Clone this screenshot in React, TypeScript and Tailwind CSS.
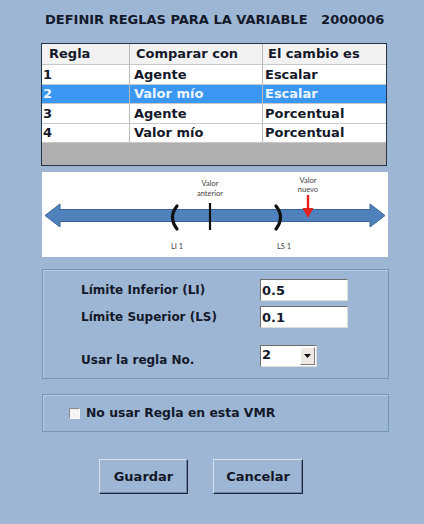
import React, { useState } from 'react';

type Regla = { id: number; comparar: string; cambio: string };

const reglas: Regla[] = [
    { id: 1, comparar: 'Agente', cambio: 'Escalar' },
    { id: 2, comparar: 'Valor mío', cambio: 'Escalar' },
    { id: 3, comparar: 'Agente', cambio: 'Porcentual' },
    { id: 4, comparar: 'Valor mío', cambio: 'Porcentual' },
];

const font = 'font-["DejaVu_Sans",Verdana,sans-serif]';

// number line with the LI / LS interval, old value tick and new value arrow
const Diagrama: React.FC = () => (
    <div className="w-[346px] h-[85px] bg-white">
        <svg width="346" height="85" viewBox="0 0 346 85">
            <polygon
                points="3,43.5 18,32 18,37.5 328,37.5 328,32 343,43.5 328,55 328,49.5 18,49.5 18,55"
                fill="#4f81bd"
                stroke="#3b6496"
                strokeWidth="1"
            />
            <path d="M135 34 Q126 45 135 57" fill="none" stroke="#111" strokeWidth="3.2" strokeLinecap="round" />
            <path d="M234 34 Q243 45 234 57" fill="none" stroke="#111" strokeWidth="3.2" strokeLinecap="round" />
            <line x1="168" y1="31" x2="168" y2="58" stroke="#111" strokeWidth="2.2" />
            <line x1="266" y1="23" x2="266" y2="38" stroke="#e3211f" strokeWidth="2.4" />
            <polygon points="260.5,36 271.5,36 266,46" fill="#e3211f" />
            <g fontFamily="Lato, 'Open Sans', sans-serif" fontSize="7.5" fill="#444" textAnchor="middle">
                <text x="168" y="14">Valor</text>
                <text x="168" y="24">anterior</text>
                <text x="266" y="11">Valor</text>
                <text x="266" y="20">nuevo</text>
                <text x="135" y="77">LI 1</text>
                <text x="242" y="77">LS 1</text>
            </g>
        </svg>
    </div>
);

const App: React.FC = () => {
    const [selected, setSelected] = useState(2);
    const [li, setLi] = useState('0.5');
    const [ls, setLs] = useState('0.1');
    const [noUsar, setNoUsar] = useState(false);

    return (
        <div className={`w-[424px] h-[524px] bg-[#9cb6d4] text-[#14192a] ${font} overflow-hidden`}>
            <div className="ml-[41px] w-[347px] flex flex-col">
                <h1 className="pt-[11px] pl-[4px] text-[13px] font-bold leading-[18px] whitespace-pre">
                    DEFINIR REGLAS PARA LA VARIABLE   2000006
                </h1>

                {/* rules grid */}
                <div className="mt-[14px] w-[346px] h-[123px] border border-[#26344a] bg-[#b0b0b0] flex flex-col text-[13px] font-bold">
                    <div className="flex h-[21px] bg-[#f2f2f2] border-b border-[#c8c8c8] items-center">
                        <div className="w-[88px] pl-[7px] border-r border-[#b8b8b8] h-full flex items-center">Regla</div>
                        <div className="w-[133px] pl-[6px] border-r border-[#b8b8b8] h-full flex items-center">Comparar con</div>
                        <div className="flex-1 pl-[5px] h-full flex items-center">El cambio es</div>
                    </div>
                    {reglas.map((r) => {
                        const sel = r.id === selected;
                        return (
                            <div
                                key={r.id}
                                onClick={() => setSelected(r.id)}
                                className={`flex h-[19.5px] border-b border-[#c8c8c8] ${
                                    sel ? 'bg-[#3a97f2] text-[#eef5ff]' : 'bg-white'
                                }`}
                            >
                                <div className="w-[88px] pl-[1px] border-r border-[#b8b8b8] flex items-center">{r.id}</div>
                                <div className="w-[133px] pl-[4px] border-r border-[#b8b8b8] flex items-center">{r.comparar}</div>
                                <div className="flex-1 pl-[2px] flex items-center">{r.cambio}</div>
                            </div>
                        );
                    })}
                </div>

                <div className="mt-[6px] ml-[1px]">
                    <Diagrama />
                </div>

                {/* limits */}
                <div className="mt-[12px] ml-[1px] w-[347px] h-[110px] border border-[#7995b6] shadow-[inset_1px_1px_0_#b9cbe0] pl-[38px] pt-[9px] text-[12px] font-bold">
                    <div className="flex items-center h-[22px]">
                        <span className="w-[179px]">Límite Inferior (LI)</span>
                        <input
                            value={li}
                            onChange={(e) => setLi(e.target.value)}
                            className="w-[88px] h-[22px] bg-white border border-t-[#6f6f6f] border-l-[#6f6f6f] border-b-[#dcdcdc] border-r-[#dcdcdc] px-[1px] text-[13px] font-bold outline-none"
                        />
                    </div>
                    <div className="flex items-center h-[22px] mt-[5px]">
                        <span className="w-[179px]">Límite Superior (LS)</span>
                        <input
                            value={ls}
                            onChange={(e) => setLs(e.target.value)}
                            className="w-[88px] h-[22px] bg-white border border-t-[#6f6f6f] border-l-[#6f6f6f] border-b-[#dcdcdc] border-r-[#dcdcdc] px-[1px] text-[13px] font-bold outline-none"
                        />
                    </div>
                    <div className="flex items-start h-[22px] mt-[17px]">
                        <span className="w-[179px] pt-[6px]">Usar la regla No.</span>
                        <div className="w-[57px] h-[22px] bg-white border border-t-[#6f6f6f] border-l-[#6f6f6f] border-b-[#dcdcdc] border-r-[#dcdcdc] flex items-center justify-between pl-[1px] text-[13px]">
                            <span className="-mt-[3px]">{selected}</span>
                            <span className="w-[15px] h-[18px] mr-[1px] bg-[#ece9e2] border border-t-white border-l-white border-b-[#7d7d7d] border-r-[#7d7d7d] flex items-center justify-center">
                                <svg width="7" height="4" viewBox="0 0 7 4">
                                    <polygon points="0,0 7,0 3.5,4" fill="#111" />
                                </svg>
                            </span>
                        </div>
                    </div>
                </div>

                {/* disable rule */}
                <div className="mt-[15px] ml-[1px] w-[347px] h-[38px] border border-[#7995b6] shadow-[inset_1px_1px_0_#b9cbe0] pl-[26px] flex items-center text-[12.4px] font-bold">
                    <button
                        onClick={() => setNoUsar(!noUsar)}
                        className="w-[11px] h-[11px] bg-[#f4f4f4] border border-t-[#8a8a8a] border-l-[#8a8a8a] border-b-white border-r-white mr-[6px] flex items-center justify-center text-[9px] leading-none"
                    >
                        {noUsar ? '✓' : ''}
                    </button>
                    <span>No usar Regla en esta VMR</span>
                </div>

                {/* actions */}
                <div className="mt-[27px] ml-[58px] flex gap-[25px]">
                    <button className="w-[89px] h-[35px] bg-[#9cb6d4] border border-t-[#d4e0ee] border-l-[#d4e0ee] border-b-[#1c2638] border-r-[#1c2638] shadow-[inset_-1px_-1px_0_#6d87a8] text-[13px] font-bold">
                        Guardar
                    </button>
                    <button className="w-[90px] h-[35px] bg-[#9cb6d4] border border-t-[#d4e0ee] border-l-[#d4e0ee] border-b-[#1c2638] border-r-[#1c2638] shadow-[inset_-1px_-1px_0_#6d87a8] text-[13px] font-bold">
                        Cancelar
                    </button>
                </div>
            </div>
        </div>
    );
};

export default App;
